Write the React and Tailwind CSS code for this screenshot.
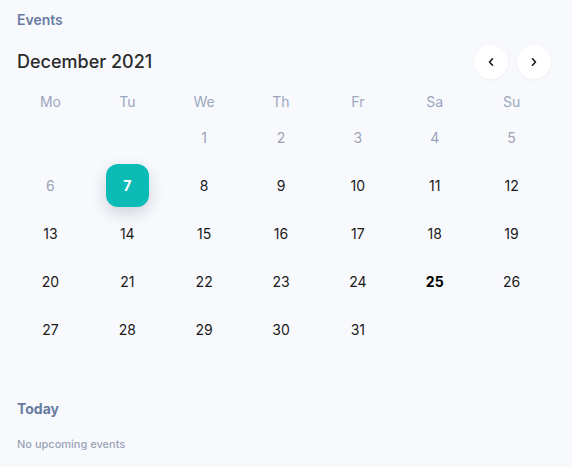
import React from 'react';

const days = ['Mo', 'Tu', 'We', 'Th', 'Fr', 'Sa', 'Su'];

const weeks = [
  [null, null, { d: 1, out: true }, { d: 2, out: true }, { d: 3, out: true }, { d: 4, out: true }, { d: 5, out: true }],
  [{ d: 6, out: true }, { d: 7, sel: true }, { d: 8 }, { d: 9 }, { d: 10 }, { d: 11 }, { d: 12 }],
  [{ d: 13 }, { d: 14 }, { d: 15 }, { d: 16 }, { d: 17 }, { d: 18 }, { d: 19 }],
  [{ d: 20 }, { d: 21 }, { d: 22 }, { d: 23 }, { d: 24 }, { d: 25, today: true }, { d: 26 }],
  [{ d: 27 }, { d: 28 }, { d: 29 }, { d: 30 }, { d: 31 }, null, null],
];

function Cell({ c }) {
  if (!c) return <div className="h-[48px]" />;
  if (c.sel) {
    return (
      <div className="h-[48px] flex items-center justify-center">
        <div className="w-[43px] h-[43px] rounded-xl bg-[#0bbcb6] text-white font-bold text-[14px] flex items-center justify-center shadow-[0_6px_16px_rgba(30,40,60,0.18)]">
          {c.d}
        </div>
      </div>
    );
  }
  return (
    <div
      className={
        'h-[48px] flex items-center justify-center text-[14px] ' +
        (c.out ? 'text-[#9ba3b4]' : c.today ? 'text-black font-bold' : 'text-[#1a1a1a]')
      }
    >
      {c.d}
    </div>
  );
}

export default function App() {
  return (
    <div className="w-[572px] h-[467px] bg-[#f8f9fd] font-['Inter',sans-serif] overflow-hidden">
      <div className="px-[17px] pt-[11px]">
        <p className="text-[14px] font-semibold text-[#687ca0] leading-[18px]">Events</p>
        <div className="flex items-center justify-between mt-[16px] pr-[4px]">
          <h2 className="text-[18px] font-medium text-[#2b2b2b] leading-[24px]">December 2021</h2>
          <div className="flex gap-[9px]">
            <button className="w-[34px] h-[34px] rounded-full bg-white flex items-center justify-center shadow-[0_1px_3px_rgba(30,40,80,0.05)]">
              <svg width="10" height="10" viewBox="0 0 10 10" fill="none" stroke="#1a1a1a" strokeWidth="1.6" strokeLinecap="round" strokeLinejoin="round">
                <path d="M6.5 1.8 3.5 5l3 3.2" />
              </svg>
            </button>
            <button className="w-[34px] h-[34px] rounded-full bg-white flex items-center justify-center shadow-[0_1px_3px_rgba(30,40,80,0.05)]">
              <svg width="10" height="10" viewBox="0 0 10 10" fill="none" stroke="#1a1a1a" strokeWidth="1.6" strokeLinecap="round" strokeLinejoin="round">
                <path d="M3.5 1.8 6.5 5l-3 3.2" />
              </svg>
            </button>
          </div>
        </div>
      </div>

      <div className="ml-[12px] w-[538px] mt-[12px]">
        <div className="grid grid-cols-7 h-[20px] items-center">
          {days.map((d) => (
            <div key={d} className="text-center text-[14px] text-[#9ba6bd]">{d}</div>
          ))}
        </div>
        <div className="mt-[2px]">
          {weeks.map((w, i) => (
            <div key={i} className="grid grid-cols-7">
              {w.map((c, j) => (
                <Cell key={j} c={c} />
              ))}
            </div>
          ))}
        </div>
      </div>

      <div className="px-[17px] mt-[47px]">
        <p className="text-[14px] font-bold text-[#687ca0] leading-[18px]">Today</p>
        <p className="text-[11px] font-medium text-[#9aa4b8] mt-[18px]">No upcoming events</p>
      </div>
    </div>
  );
}
